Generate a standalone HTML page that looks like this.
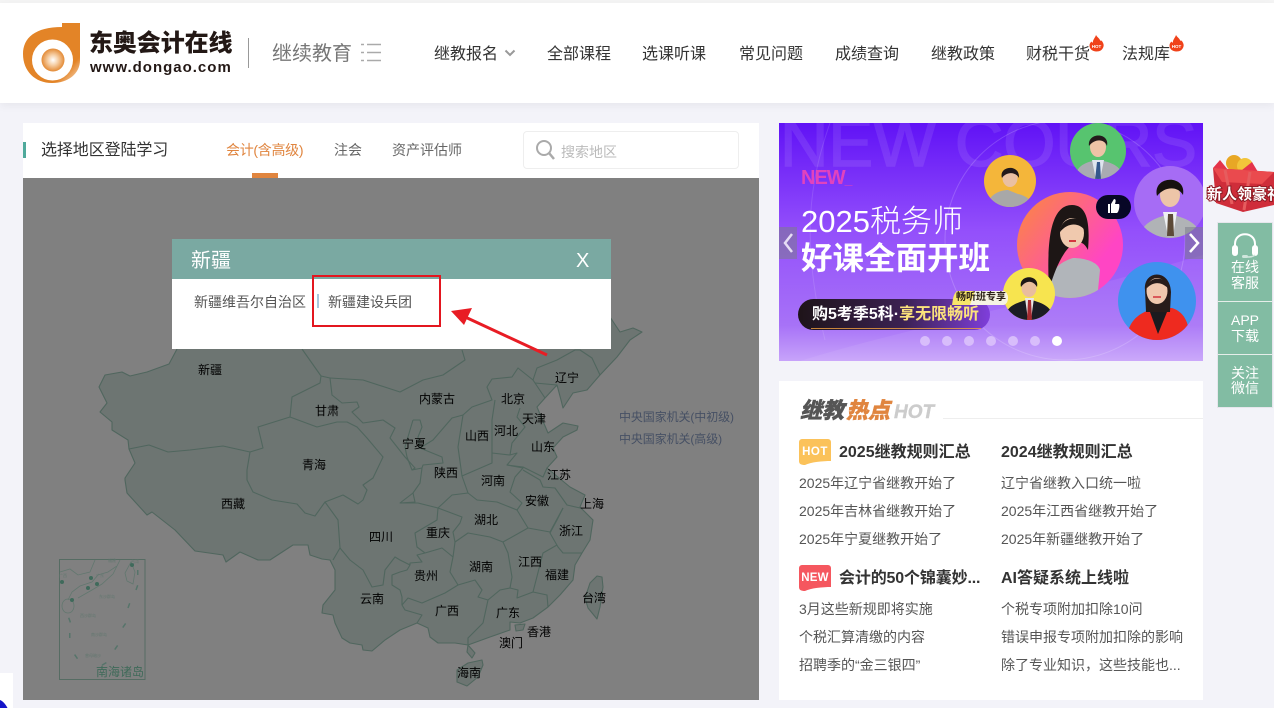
<!DOCTYPE html>
<html lang="zh"><head><meta charset="utf-8"><title>东奥会计在线</title>
<style>
*{margin:0;padding:0;box-sizing:border-box}
html,body{width:1274px;height:708px;overflow:hidden;background:#f3f3f9;font-family:"Liberation Sans","Noto Sans CJK SC",sans-serif;color:#333}
#p{position:relative;width:1274px;height:708px;overflow:hidden}
.a,.t{position:absolute}
.t{white-space:nowrap;line-height:20px}
.n{font-size:16px;top:45px;color:#333}
.m{font-size:12px;color:#000;line-height:14px;transform:translate(-50%,-50%)}
.l{font-size:14px;color:#555}
.h{font-size:16px;font-weight:bold;color:#333}
svg{position:absolute;display:block}
</style></head><body><div id="p">
<div class="a" style="left:0;top:0;width:1274px;height:3px;background:#f4f4f4"></div>
<div class="a" style="left:0;top:3px;width:1274px;height:100px;background:#fff;box-shadow:0 3px 8px rgba(0,0,0,.05)"></div>

<svg style="left:20px;top:20px" width="64" height="66" viewBox="20 20 64 66">
<defs><radialGradient id="lg"><stop offset="0" stop-color="#fff"/><stop offset=".45" stop-color="#f6cfa6"/><stop offset="1" stop-color="#e38a35"/></radialGradient>
<linearGradient id="lo" x1="0" y1="0" x2="1" y2="1"><stop offset=".78" stop-color="#e38427"/><stop offset="1" stop-color="#fbe6d2"/></linearGradient></defs>
<path d="M80 23V60C80 74 68 83 52 83C35 83 23 71 23 54C23 38 35 27 62 27V23Z" fill="url(#lo)"/>
<circle cx="52.500" cy="60" r="20.500" fill="#fff"/><circle cx="53" cy="60" r="11.500" fill="url(#lg)"/>
</svg>
<div class="t" style="left:89px;top:31px;font-size:24px;line-height:26px;font-weight:900;color:#231815;letter-spacing:-.1px">东奥会计在线</div>
<div class="t" style="left:90px;top:58px;font-size:15px;font-weight:bold;color:#231815;letter-spacing:1px">www.dongao.com</div>
<div class="a" style="left:248px;top:38px;width:1px;height:30px;background:#999"></div>
<div class="t" style="left:272px;top:44px;font-size:20px;color:#777">继续教育</div>
<svg style="left:360px;top:43px" width="22" height="20" viewBox="0 0 22 20"><path d="M1 1.500H4M7 1.500H21M1 9.500H4M7 9.500H21M1 17.500H4M7 17.500H21" stroke="#aaa" stroke-width="1.500"/></svg>

<div class="t n" style="left:434px">继教报名</div>
<svg style="left:504px;top:49px" width="12" height="8" viewBox="0 0 12 8"><path d="M1.500 1.500L6 6L10.500 1.500" fill="none" stroke="#999" stroke-width="2"/></svg>
<div class="t n" style="left:547px">全部课程</div>
<div class="t n" style="left:642px">选课听课</div>
<div class="t n" style="left:739px">常见问题</div>
<div class="t n" style="left:835px">成绩查询</div>
<div class="t n" style="left:931px">继教政策</div>
<div class="t n" style="left:1026px">财税干货</div>
<div class="t n" style="left:1122px">法规库</div>
<svg style="left:1089px;top:35px" width="15" height="17" viewBox="0 0 15 17"><path d="M7 0C8 2 10 3 11 5C11.500 6 12 6 12.500 5.500C14.500 8 15 10 14.500 11.500C13.500 15 11 16.500 7.500 16.500C3.500 16.500 .5 14 .5 10.500C.5 8.500 1.500 7.500 2.500 6.500C3 7.500 3.500 7.500 4 7.500C3.500 5 6 3 7 0Z" fill="#f0421a"/><text x="7.500" y="13" font-size="4.500" font-weight="bold" fill="#fff" text-anchor="middle">HOT</text></svg>
<svg style="left:1169px;top:35px" width="15" height="17" viewBox="0 0 15 17"><path d="M7 0C8 2 10 3 11 5C11.500 6 12 6 12.500 5.500C14.500 8 15 10 14.500 11.500C13.500 15 11 16.500 7.500 16.500C3.500 16.500 .5 14 .5 10.500C.5 8.500 1.500 7.500 2.500 6.500C3 7.500 3.500 7.500 4 7.500C3.500 5 6 3 7 0Z" fill="#f0421a"/><text x="7.500" y="13" font-size="4.500" font-weight="bold" fill="#fff" text-anchor="middle">HOT</text></svg>

<div class="a" style="left:23px;top:123px;width:736px;height:55px;background:#fff"></div>
<div class="a" style="left:23px;top:142px;width:3px;height:16px;background:#4fa99b"></div>
<div class="t" style="left:41px;top:141px;font-size:16px;color:#333;letter-spacing:-.1px">选择地区登陆学习</div>
<div class="t" style="left:226px;top:140px;font-size:14px;color:#e0853f;letter-spacing:-.3px">会计(含高级)</div>
<div class="t" style="left:334px;top:140px;font-size:14px;color:#666">注会</div>
<div class="t" style="left:392px;top:140px;font-size:14px;color:#666">资产评估师</div>
<div class="a" style="left:252px;top:173px;width:26px;height:5px;background:#e0853f"></div>
<div class="a" style="left:523px;top:131px;width:216px;height:38px;border:1px solid #eee;border-radius:4px;background:#fff"></div>
<svg style="left:535px;top:139px" width="20" height="22" viewBox="0 0 20 22"><circle cx="9" cy="9" r="7" fill="none" stroke="#aaa" stroke-width="2"/><path d="M14 14L19 20" stroke="#aaa" stroke-width="2.500"/></svg>
<div class="t" style="left:561px;top:142px;font-size:14px;color:#bbb">搜索地区</div>

<svg style="left:23px;top:178px" width="736" height="522" viewBox="23 178 736 522">
<rect x="23" y="178" width="736" height="522" fill="#808080"/>
<g fill="#6d7572" stroke="#50665e" stroke-width="1.100" stroke-linejoin="round">
<path d="M177 340L177 349L169 364L147 372L130 376L122 372L105 375L99 387L107 403L100 412L112 422L112 430L128 440L129 449L135 463L125 478L125 480L127 493L147 515L152 512L175 530L195 551L223 555L226 562L240 552L258 560L270 560L293 545L308 545L310 555L322 559L330 560L335 570L335 590L323 605L322 613L333 615L335 623L342 638L350 643L362 645L363 650L372 651L385 640L400 630L417 623L428 628L430 637L438 643L455 643L468 645L467 652L472 658L475 653L468 645L490 637L510 630L510 622L520 623L533 618L548 607L560 595L573 580L575 565L582 553L590 540L593 520L580 507L585 495L570 487L547 468L557 457L553 448L563 437L577 430L578 426L563 423L548 433L537 407L545 398L557 385L561 400L563 408L573 393L587 390L600 375L617 357L630 340L642 332L633 328L620 332L612 320L605 310Z"/>
<path d="M602 577L597 576L590 583L585 598L588 608L597 619L600 607L603 587Z"/>
<path d="M482 660L468 663L457 670L457 682L467 686L478 677L483 665Z"/>
<path d="M515 625L525 624L523 630L516 631Z"/>
</g>
<g fill="none" stroke="#50665e" stroke-width="1.100" stroke-linejoin="round">
<path d="M129 449L149 445L168 452L190 450L223 446L250 452L263 448L258 427L290 417L292 397L320 383L321 376L302 349"/>
<path d="M250 452L247 470L247 480L253 492L272 500L297 504L305 513L315 516L325 502L338 520L340 548L333 560"/>
<path d="M290 417L317 427L337 422L347 422L357 427L367 438L383 457L373 478L363 485L367 490L363 500L358 504L343 495L325 502"/>
<path d="M321 376L330 378L332 395L342 403L357 402L359 407L352 412L363 423L383 420L395 428L390 438L405 457L415 468L412 470"/>
<path d="M330 378L363 380L400 392L423 380L443 375L465 360L462 350"/>
<path d="M413 420L420 420L422 427L418 437L420 448L442 457L443 463L423 465L422 468L412 470L407 457L405 447L410 430L413 420"/>
<path d="M420 448L433 440L452 418L463 415L472 407L492 400L487 387L492 379L512 377L518 368L533 380L537 368L557 360L575 350"/>
<path d="M575 350L580 350L592 358L600 375"/>
<path d="M533 380L535 383L545 398"/><path d="M535 383L557 385"/>
<path d="M463 415L458 447L462 476L492 463L492 453L492 420L495 400"/>
<path d="M462 476L468 493L452 495L438 508L418 503L400 503L413 493L420 483L422 468"/>
<path d="M492 453L510 455L517 453L507 465L523 468L515 477L510 492L522 503L517 510L497 502L477 500L468 493"/>
<path d="M510 455L512 443L525 427L517 417L520 408"/>
<path d="M507 465L523 467L543 477L547 468"/>
<path d="M523 470L540 480L543 487L555 488L567 505L580 508"/>
<path d="M517 510L528 528L550 532L563 508"/>
<path d="M563 508L557 520L550 533L558 547L563 553L582 553"/>
<path d="M528 528L503 542L508 553L512 577L510 588L518 590L517 598L533 592L547 595L548 607"/>
<path d="M557 545L543 553L533 592"/>
<path d="M503 542L490 537L468 533L455 542L453 557L450 572L458 585L475 580L482 590L478 597L488 600L500 590L510 588"/>
<path d="M488 600L483 623L468 638L468 645"/>
<path d="M458 585L445 593L422 603L408 598L402 605L405 610L422 615L417 623"/>
<path d="M453 557L442 548L425 553L417 555L422 562L410 563L410 565L407 570L400 572L392 575L392 585L400 590L402 597L402 605"/>
<path d="M438 508L462 517L460 523L453 532L455 542"/>
<path d="M438 508L437 520L415 533L417 547L425 553"/>
<path d="M340 548L350 560L363 570L372 587L383 585L385 570L395 557L400 560L410 565"/>
<path d="M413 493L415 502L400 503"/>
</g>
<rect x="59.500" y="559.500" width="85.500" height="120" fill="none" stroke="#566c63" stroke-width="1"/>
<g fill="none" stroke="#62776f" stroke-width=".8"><path d="M60 572L70 569L78 575L90 572L95 560M120 560L117 566L108 572L98 575L92 582L80 586L72 592L68 600M120 560L113 574L102 584L92 590L78 598"/><ellipse cx="68" cy="606" rx="6" ry="7"/><path d="M131 562L125 573L127 581L133 584L135 572Z"/></g>
<g fill="#3f6a5b"><circle cx="91" cy="578" r="2"/><circle cx="97" cy="584" r="2"/><circle cx="88" cy="588" r="2"/><circle cx="72" cy="600" r="2"/><circle cx="62" cy="582" r="2"/><circle cx="132" cy="565" r="2"/></g>
<g fill="#56746a"><rect x="137" y="570" width="1.500" height="5"/><rect x="137" y="585" width="1.500" height="5" transform="rotate(20 137 585)"/><rect x="129" y="603" width="1.500" height="5" transform="rotate(20 129 603)"/><rect x="125" y="623" width="1.500" height="5" transform="rotate(35 125 623)"/><rect x="117" y="645" width="1.500" height="5" transform="rotate(35 117 645)"/><rect x="106" y="662" width="1.500" height="5" transform="rotate(60 106 662)"/><rect x="68" y="618" width="1.500" height="5" transform="rotate(-20 68 618)"/><rect x="69" y="633" width="1.500" height="5"/><rect x="74" y="655" width="1.500" height="5" transform="rotate(-35 74 655)"/></g>
<g fill="#62776f" font-size="4" text-anchor="middle"><text x="63" y="577">广西</text><text x="100" y="577">广东</text><text x="112" y="562">福建</text><text x="135" y="563">台湾</text><text x="107" y="598">东沙群岛</text><text x="88" y="617">西沙群岛</text><text x="99" y="636">南沙群岛</text><text x="93" y="657">曾母暗沙</text></g>
</svg>
<div class="t" style="left:96px;top:662px;font-size:12px;color:#3f6a59">南海诸岛</div>

<div class="t m" style="left:210px;top:370px">新疆</div><div class="t m" style="left:327px;top:411px">甘肃</div><div class="t m" style="left:437px;top:399px">内蒙古</div><div class="t m" style="left:513px;top:399px">北京</div><div class="t m" style="left:567px;top:378px">辽宁</div><div class="t m" style="left:534px;top:419px">天津</div><div class="t m" style="left:506px;top:431px">河北</div><div class="t m" style="left:477px;top:436px">山西</div><div class="t m" style="left:414px;top:444px">宁夏</div><div class="t m" style="left:543px;top:447px">山东</div><div class="t m" style="left:314px;top:465px">青海</div><div class="t m" style="left:446px;top:473px">陕西</div><div class="t m" style="left:493px;top:481px">河南</div><div class="t m" style="left:559px;top:475px">江苏</div><div class="t m" style="left:537px;top:501px">安徽</div><div class="t m" style="left:592px;top:504px">上海</div><div class="t m" style="left:233px;top:504px">西藏</div><div class="t m" style="left:486px;top:520px">湖北</div><div class="t m" style="left:571px;top:531px">浙江</div><div class="t m" style="left:381px;top:537px">四川</div><div class="t m" style="left:438px;top:533px">重庆</div><div class="t m" style="left:530px;top:562px">江西</div><div class="t m" style="left:481px;top:567px">湖南</div><div class="t m" style="left:426px;top:576px">贵州</div><div class="t m" style="left:557px;top:575px">福建</div><div class="t m" style="left:594px;top:598px">台湾</div><div class="t m" style="left:372px;top:599px">云南</div><div class="t m" style="left:447px;top:611px">广西</div><div class="t m" style="left:508px;top:613px">广东</div><div class="t m" style="left:539px;top:632px">香港</div><div class="t m" style="left:511px;top:643px">澳门</div><div class="t m" style="left:469px;top:673px">海南</div>
<div class="t" style="left:619px;top:407px;font-size:12px;color:#465064;letter-spacing:-.1px">中央国家机关(中初级)</div>
<div class="t" style="left:619px;top:429px;font-size:12px;color:#465064;letter-spacing:-.1px">中央国家机关(高级)</div>

<div class="a" style="left:172px;top:239px;width:439px;height:110px;background:#fff"></div>
<div class="a" style="left:172px;top:239px;width:439px;height:40px;background:#7aa9a2"></div>
<div class="t" style="left:191px;top:251px;font-size:20px;color:#fff">新疆</div>
<div class="t" style="left:576px;top:251px;font-size:20px;color:#fff">X</div>
<div class="t" style="left:194px;top:292px;font-size:14px;color:#555">新疆维吾尔自治区</div>
<div class="a" style="left:317px;top:294px;width:2px;height:14px;background:#a9c8dd"></div>
<div class="t" style="left:328px;top:292px;font-size:14px;color:#555">新疆建设兵团</div>
<div class="a" style="left:312px;top:275px;width:129px;height:52px;border:2px solid #e3161f"></div>
<svg style="left:445px;top:300px" width="110" height="62" viewBox="445 300 110 62"><path d="M547 355L463 316" stroke="#e81c24" stroke-width="3"/><path d="M451 311L472 308L464 325Z" fill="#e81c24"/></svg>

<svg style="left:779px;top:123px" width="424" height="238" viewBox="779 123 424 238">
<defs>
<linearGradient id="bg" x1="0" y1="0" x2="0" y2="1"><stop offset="0" stop-color="#6012f6"/><stop offset=".45" stop-color="#934ffb"/><stop offset=".85" stop-color="#a772f7"/><stop offset="1" stop-color="#c7a3fa"/></linearGradient>
<linearGradient id="mid" x1="0" y1="0" x2="1" y2=".8"><stop offset="0" stop-color="#fb8a3a"/><stop offset=".8" stop-color="#ff45c4"/></linearGradient>
<linearGradient id="pill" x1="0" x2="1"><stop offset="0" stop-color="#1e1419"/><stop offset=".55" stop-color="#3b2152"/><stop offset="1" stop-color="#7f3edb"/></linearGradient>
<clipPath id="c1"><circle cx="1010" cy="181" r="26"/></clipPath>
<clipPath id="c2"><circle cx="1098" cy="151" r="28"/></clipPath>
<clipPath id="c3"><circle cx="1170" cy="202" r="36"/></clipPath>
<clipPath id="c4"><circle cx="1070" cy="245" r="53"/></clipPath>
<clipPath id="c5"><circle cx="1029" cy="294" r="26"/></clipPath>
<clipPath id="c6"><circle cx="1157" cy="301" r="39"/></clipPath>
</defs>
<rect x="779" y="123" width="424" height="238" fill="url(#bg)"/>
<path d="M800 361C900 330 1050 300 1203 255V361Z" fill="#fff" opacity=".07"/>
<text x="780" y="166" font-size="67" fill="#fff" stroke="#fff" stroke-width="1.500" opacity=".09" font-family="Liberation Sans">NEW COURS</text>
<circle cx="1065" cy="240" r="120" fill="none" stroke="#fff" stroke-opacity=".18"/>
<path d="M830 123C810 180 800 240 825 340" fill="none" stroke="#fff" stroke-opacity=".12"/>
<circle cx="1010" cy="181" r="26" fill="#f4b63a"/>
<g clip-path="url(#c1)"><path d="M985 207C990 194 1000 190 1008 190L1018 194C1028 196 1032 202 1034 207Z" fill="#a8a8a8"/><ellipse cx="1010" cy="178" rx="7.500" ry="9" fill="#eac0a2"/><path d="M1002 178C998 166 1020 163 1019 178C1015 171 1006 172 1002 178Z" fill="#231a1a"/></g>
<circle cx="1098" cy="151" r="28" fill="#57c46f"/>
<g clip-path="url(#c2)"><path d="M1074 180C1076 165 1086 162 1098 160C1110 162 1122 165 1124 180Z" fill="#a9abb2"/><path d="M1092 160H1104L1100 180H1096Z" fill="#dfe5ee"/><path d="M1097 162H1100L1101 180H1095Z" fill="#34578c"/><ellipse cx="1098" cy="147" rx="8" ry="10" fill="#eec3a6"/><path d="M1089 146C1087 132 1110 132 1107 146C1104 138 1094 139 1089 146Z" fill="#241c1c"/></g>
<circle cx="1170" cy="202" r="36" fill="#a66cf5"/>
<g clip-path="url(#c3)"><path d="M1138 238C1143 222 1155 218 1170 214C1185 218 1198 222 1202 238Z" fill="#b0b3b6"/><path d="M1163 212H1177L1173 236H1168Z" fill="#eef0f2"/><path d="M1168 214H1173L1174 236H1167Z" fill="#5c4a38"/><ellipse cx="1170" cy="195" rx="10" ry="12" fill="#edc5a8"/><path d="M1157 196C1152 175 1187 174 1183 195C1178 186 1165 186 1157 196Z" fill="#17110f"/></g>
<circle cx="1070" cy="245" r="53" fill="url(#mid)"/>
<g clip-path="url(#c4)"><path d="M1043 300C1048 270 1060 262 1073 258C1085 258 1098 262 1100 270L1097 300Z" fill="#b1b5ba"/><path d="M1049 290C1047 250 1048 205 1072 205C1088 205 1090 225 1088 250C1078 230 1060 250 1049 290Z" fill="#1d1615"/><ellipse cx="1072" cy="233" rx="12" ry="15" fill="#f0c9ae"/><path d="M1060 232C1060 216 1085 212 1086 232C1080 222 1068 222 1060 232Z" fill="#1d1615"/><path d="M1069 241H1076" stroke="#d3363f" stroke-width="2"/></g>
<rect x="1096" y="195" width="35" height="24" rx="12" fill="#070726"/>
<path d="M1108 204H1110V213H1108ZM1111 204L1114 199C1116 199 1116 201 1115 204H1119C1120 205 1119 212 1117 213H1111Z" fill="#fff"/>
<circle cx="1029" cy="294" r="26" fill="#f7e44f"/>
<g clip-path="url(#c5)"><path d="M1003 320C1007 304 1018 303 1029 299C1040 303 1051 304 1055 320Z" fill="#1c1c24"/><path d="M1025 298H1034L1031 320H1028Z" fill="#e8e8e8"/><path d="M1028 300H1031L1032 320H1027Z" fill="#a52a30"/><ellipse cx="1029" cy="288" rx="7.500" ry="9" fill="#e9bd9d"/><path d="M1021 287C1018 274 1040 274 1037 287C1033 280 1026 280 1021 287Z" fill="#1d1717"/></g>
<circle cx="1157" cy="301" r="39" fill="#3f92ee"/>
<g clip-path="url(#c6)"><path d="M1125 345C1128 318 1140 313 1155 308L1172 308C1184 312 1190 322 1190 345Z" fill="#ee2a1f"/><path d="M1150 312L1158 334L1167 312Z" fill="#1a1a1e"/><path d="M1145 290C1143 270 1170 268 1171 292L1170 312H1146Z" fill="#281c1a"/><ellipse cx="1157" cy="291" rx="10.500" ry="13" fill="#f0c8ae"/><path d="M1153 297H1161" stroke="#d3363f" stroke-width="1.500"/><path d="M1147 288C1147 277 1166 274 1168 288C1160 281 1153 282 1147 288Z" fill="#281c1a"/></g>
<rect x="798" y="299" width="192" height="31" rx="15.500" fill="url(#pill)"/>
<rect x="811" y="328" width="170" height="1" fill="#f0a040" opacity=".8"/>
<path d="M957 291H1003A5 7 0 0 1 1003 305H952C953 300 953 294 957 291Z" fill="#f7e56a"/><path d="M975 291H1003A5 7 0 0 1 1003 305H970Z" fill="#f6f3e3"/>
<g fill="#d8bdfb"><circle cx="925" cy="341" r="5"/><circle cx="947" cy="341" r="5"/><circle cx="969" cy="341" r="5"/><circle cx="991" cy="341" r="5"/><circle cx="1013" cy="341" r="5"/><circle cx="1035" cy="341" r="5"/></g><circle cx="1057" cy="341" r="5" fill="#fff"/>
<rect x="779" y="227" width="18" height="32" fill="#7b7b8b" fill-opacity=".55"/><rect x="1185" y="227" width="18" height="32" fill="#7b7b8b" fill-opacity=".55"/>
<path d="M792 234L785 243L792 252" fill="none" stroke="#e6dcf5" stroke-width="2.500"/><path d="M1190 234L1198 243L1190 252" fill="none" stroke="#fff" stroke-width="2.500"/>
</svg>
<div class="t" style="left:801px;top:168px;font-size:20px;font-weight:bold;color:#e143bd;letter-spacing:-1px">NEW<span style="font-size:14px">_</span></div>
<div class="t" style="left:801px;top:206px;font-size:31px;line-height:32px;color:#fff;font-weight:300">2025税务师</div>
<div class="t" style="left:801px;top:241px;font-size:31.500px;line-height:34px;color:#fff;font-weight:bold">好课全面开班</div>
<div class="t" style="left:812px;top:305px;font-size:16px;color:#fff;font-weight:bold">购5考季5科·<span style="color:#fbe27c">享无限畅听</span></div>
<div class="t" style="left:956px;top:288px;font-size:10px;color:#2b2016;font-weight:bold">畅听班专享</div>

<svg style="left:1205px;top:150px" width="69" height="64" viewBox="1205 150 69 64">
<circle cx="1234" cy="163" r="8" fill="#e8a725"/><circle cx="1245" cy="166" r="8" fill="#f2c43a"/><path d="M1213 168L1220 160L1228 170ZM1242 170L1252 162L1258 172Z" fill="#e4334a"/>
<path d="M1213 168L1274 172V205L1243 212L1216 203Z" fill="#cf2d3a"/><path d="M1213 168L1274 172L1262 184L1222 182Z" fill="#ea4a4e"/>
<path d="M1225 170L1232 204M1250 172L1244 210" stroke="#e65c5e" stroke-width="3"/>
<text x="1207" y="199" font-size="15" font-weight="bold" fill="#fff" stroke="#8e1a24" stroke-width="2" paint-order="stroke">新人领豪礼</text>
</svg>
<div class="a" style="left:1217px;top:222px;width:56px;height:186px;border:1px solid #e6e6ec;background:#82bca3"></div>
<div class="a" style="left:1218px;top:301px;width:54px;height:1px;background:#e6eeea"></div>
<div class="a" style="left:1218px;top:354px;width:54px;height:1px;background:#e6eeea"></div>
<svg style="left:1231px;top:232px" width="28" height="26" viewBox="0 0 28 26"><path d="M4 15V12C4 -1 24 -1 24 12V15" fill="none" stroke="#fff" stroke-width="2"/><rect x="1" y="13" width="6" height="11" rx="3" fill="#fff"/><rect x="21" y="13" width="6" height="11" rx="3" fill="#fff"/><path d="M24 23C22 25 19 25 16 25" stroke="#cfe6dc" fill="none" stroke-width="1.500"/><rect x="11" y="23" width="6" height="3" rx="1.500" fill="#cfe6dc"/></svg>
<div class="a" style="left:1218px;top:259px;width:54px;text-align:center;font-size:14px;line-height:16px;color:#fff">在线<br>客服</div>
<div class="a" style="left:1218px;top:312px;width:54px;text-align:center;font-size:14px;line-height:16px;color:#fff">APP<br>下载</div>
<div class="a" style="left:1218px;top:366px;width:54px;text-align:center;font-size:14px;line-height:15px;color:#fff">关注<br>微信</div>

<div class="a" style="left:779px;top:381px;width:424px;height:319px;background:#fff"></div>
<div class="t" style="left:800px;top:399px;font-size:22px;line-height:23px;font-weight:900;font-style:italic;color:#555;-webkit-text-stroke:.4px currentColor">继教<span style="color:#e0853f;margin-left:2px">热点</span><span style="color:#ccc;font-size:19px;margin-left:4px">HOT</span></div>
<div class="a" style="left:943px;top:418px;width:260px;height:1px;background:#eee"></div>

<svg style="left:799px;top:439px" width="33" height="27" viewBox="0 0 33 27"><path d="M3 0H29A3 3 0 0 1 32 3V22C24 22 12 23 6 26C2 26 0 25 0 22V3A3 3 0 0 1 3 0Z" fill="#fbc25a"/><text x="16" y="16" font-size="11.500" font-weight="bold" fill="#fff" text-anchor="middle" letter-spacing=".5">HOT</text></svg>
<svg style="left:799px;top:565px" width="33" height="27" viewBox="0 0 33 27"><path d="M3 0H29A3 3 0 0 1 32 3V22C24 22 12 23 6 26C2 26 0 25 0 22V3A3 3 0 0 1 3 0Z" fill="#f5575f"/><text x="16" y="16" font-size="11.500" font-weight="bold" fill="#fff" text-anchor="middle" letter-spacing=".2">NEW</text></svg>
<div class="t h" style="left:839px;top:443px">2025继教规则汇总</div>
<div class="t h" style="left:1001px;top:443px">2024继教规则汇总</div>
<div class="t h" style="left:839px;top:569px;letter-spacing:-.15px">会计的50个锦囊妙...</div>
<div class="t h" style="left:1001px;top:569px">AI答疑系统上线啦</div>
<div class="t l" style="left:799px;top:473px">2025年辽宁省继教开始了</div>
<div class="t l" style="left:799px;top:501px">2025年吉林省继教开始了</div>
<div class="t l" style="left:799px;top:529px">2025年宁夏继教开始了</div>
<div class="t l" style="left:1001px;top:473px">辽宁省继教入口统一啦</div>
<div class="t l" style="left:1001px;top:501px">2025年江西省继教开始了</div>
<div class="t l" style="left:1001px;top:529px">2025年新疆继教开始了</div>
<div class="t l" style="left:799px;top:599px">3月这些新规即将实施</div>
<div class="t l" style="left:799px;top:627px">个税汇算清缴的内容</div>
<div class="t l" style="left:799px;top:655px">招聘季的“金三银四”</div>
<div class="t l" style="left:1001px;top:599px">个税专项附加扣除10问</div>
<div class="t l" style="left:1001px;top:627px">错误申报专项附加扣除的影响</div>
<div class="t l" style="left:1001px;top:655px">除了专业知识，这些技能也...</div>

<div class="a" style="left:0;top:673px;width:13px;height:35px;background:#fff"></div>
<svg style="left:0;top:698px" width="8" height="10" viewBox="0 0 8 10"><path d="M0 2C3 3 6 7 7.500 10H0Z" fill="#1414c8"/></svg>
</div></body></html>
